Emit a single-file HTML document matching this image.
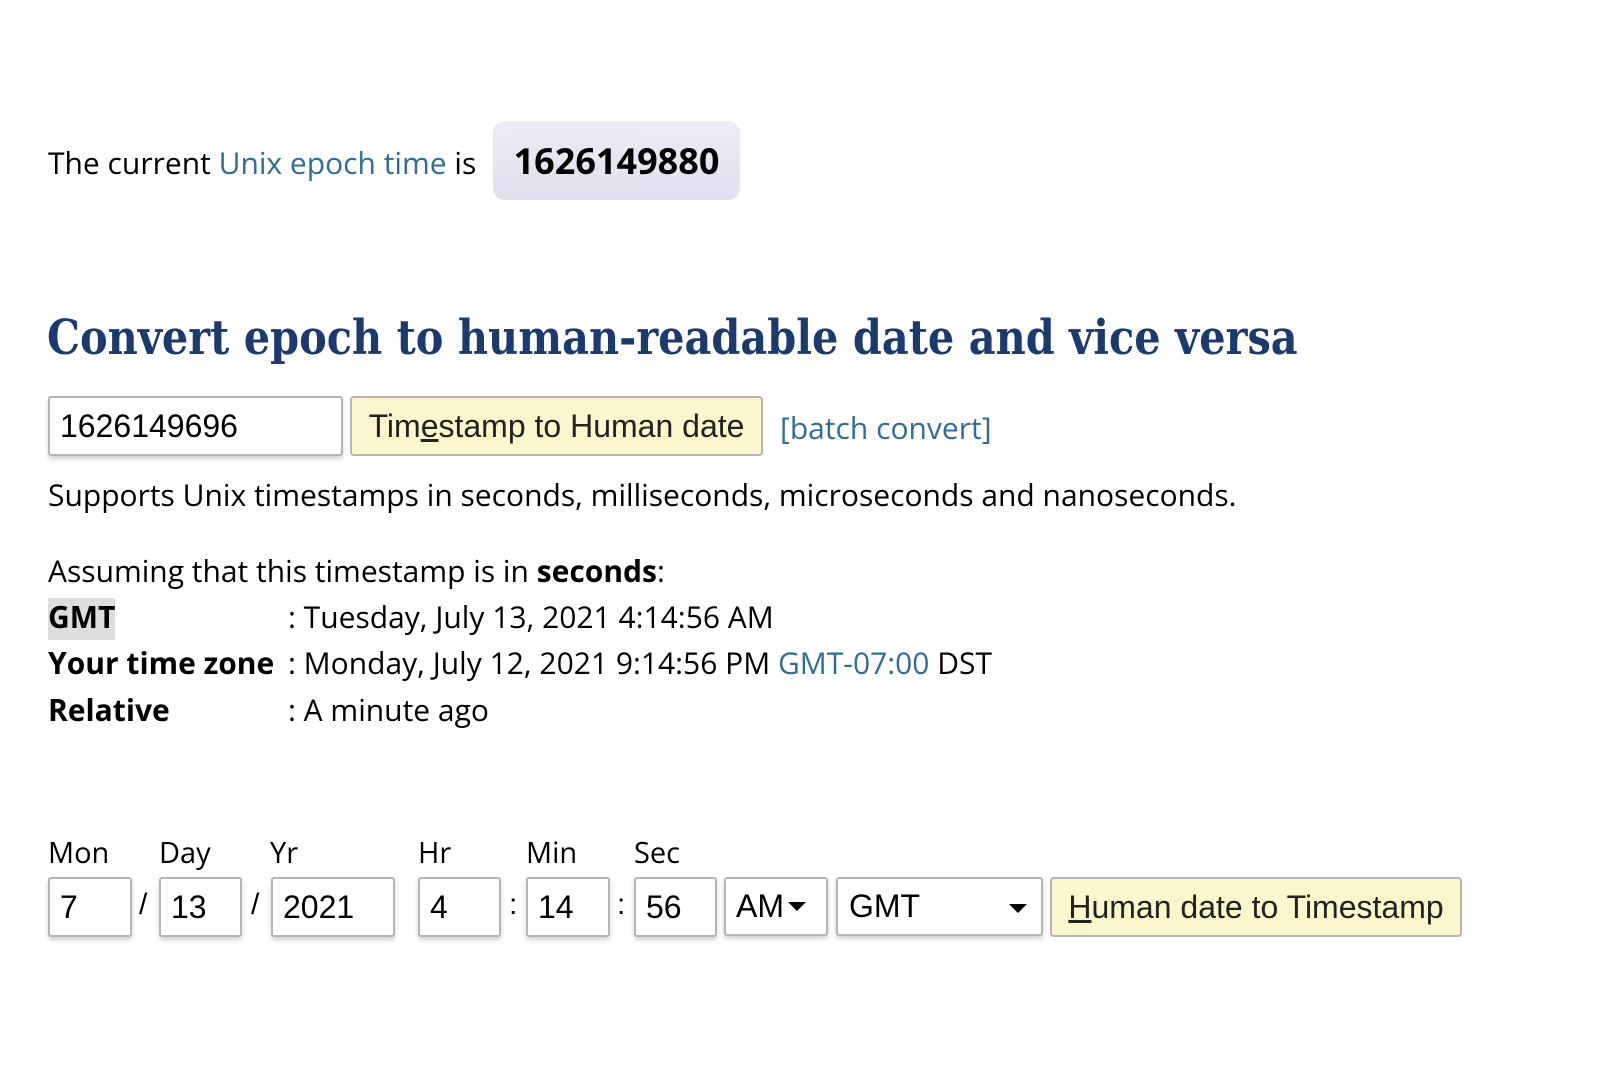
<!DOCTYPE html>
<html><head><meta charset="utf-8"><style>
*{box-sizing:border-box}
body{margin:0;width:1616px;height:1072px;background:#fff;font-family:"Open Sans","DejaVu Sans Condensed","Liberation Sans",sans-serif;color:#000;position:relative;overflow:hidden}
.a{position:absolute;white-space:nowrap}
.t{font-size:30px}
a{color:#2f6e96;text-decoration:none}
.box{position:absolute;left:493px;top:121px;width:247px;height:79px;border-radius:12px;background:linear-gradient(#ececf8,#e0e0ee);font-size:36px;font-weight:bold;display:flex;align-items:center;justify-content:center}
h1{position:absolute;left:47px;top:310px;margin:0;font-family:"Roboto Slab","DejaVu Serif","Liberation Serif",serif;font-weight:bold;font-size:48px;color:#1c3a6e;white-space:nowrap;transform:scaleX(0.864);transform-origin:0 0}
.in{position:absolute;border:2px solid #b5b5b5;border-radius:3px;background:#fff;font-family:"Liberation Sans",Arial,sans-serif;font-size:32px;padding-left:10px;display:flex;align-items:center;box-shadow:0 3px 5px rgba(0,0,0,.18)}
.btn{position:absolute;border:2px solid #b5b5b5;border-radius:4px;background:#fcf6cd;font-family:"Liberation Sans",Arial,sans-serif;font-size:32px;color:#222;display:flex;align-items:center;justify-content:center}
.lb{font-size:29px;position:absolute;top:833px}
.sep{position:absolute;top:888px;font-family:"Liberation Sans",sans-serif;font-size:30px}
.tri{display:inline-block;width:0;height:0;border-left:9px solid transparent;border-right:9px solid transparent;border-top:9px solid #000;margin-left:4px;vertical-align:middle}
</style></head><body>
<div class="a t" style="left:48px;top:142px">The current <a>Unix epoch time</a> is</div>
<div class="box">1626149880</div>
<h1>Convert epoch to human-readable date and vice versa</h1>
<div class="in" style="left:48px;top:396px;width:295px;height:60px">1626149696</div>
<div class="btn" style="left:350px;top:396px;width:413px;height:60px">Tim<u>e</u>stamp to Human date</div>
<div class="a t" style="left:780px;top:407px"><a>[batch convert]</a></div>
<div class="a t" style="left:48px;top:474px">Supports Unix timestamps in seconds, milliseconds, microseconds and nanoseconds.</div>
<div class="a t" style="left:48px;top:550px">Assuming that this timestamp is in <b>seconds</b>:</div>
<div class="a" style="left:48px;top:598px;width:67px;height:42px;background:#ddd"></div>
<div class="a t" style="left:48px;top:596px"><b>GMT</b></div>
<div class="a t" style="left:288px;top:596px">: Tuesday, July 13, 2021 4:14:56 AM</div>
<div class="a t" style="left:48px;top:642px"><b>Your time zone</b></div>
<div class="a t" style="left:288px;top:642px">: Monday, July 12, 2021 9:14:56 PM <a>GMT-07:00</a> DST</div>
<div class="a t" style="left:48px;top:689px"><b>Relative</b></div>
<div class="a t" style="left:288px;top:689px">: A minute ago</div>
<div class="lb" style="left:48px">Mon</div>
<div class="lb" style="left:159px">Day</div>
<div class="lb" style="left:270px">Yr</div>
<div class="lb" style="left:418px">Hr</div>
<div class="lb" style="left:526px">Min</div>
<div class="lb" style="left:634px">Sec</div>
<div class="in" style="left:48px;top:877px;width:84px;height:60px">7</div>
<div class="sep" style="left:139px">/</div>
<div class="in" style="left:159px;top:877px;width:83px;height:60px">13</div>
<div class="sep" style="left:251px">/</div>
<div class="in" style="left:271px;top:877px;width:124px;height:60px">2021</div>
<div class="in" style="left:418px;top:877px;width:83px;height:60px">4</div>
<div class="sep" style="left:509px">:</div>
<div class="in" style="left:526px;top:877px;width:84px;height:60px">14</div>
<div class="sep" style="left:617px">:</div>
<div class="in" style="left:634px;top:877px;width:83px;height:60px">56</div>
<div class="in" style="left:724px;top:877px;width:104px;height:59px;padding-left:10px">AM<span class="tri"></span></div>
<div class="in" style="left:836px;top:877px;width:207px;height:59px;padding-left:11px">GMT<span class="tri" style="position:absolute;right:14px;top:25px"></span></div>
<div class="btn" style="left:1050px;top:877px;width:412px;height:60px"><u>H</u>uman date to Timestamp</div>
</body></html>
